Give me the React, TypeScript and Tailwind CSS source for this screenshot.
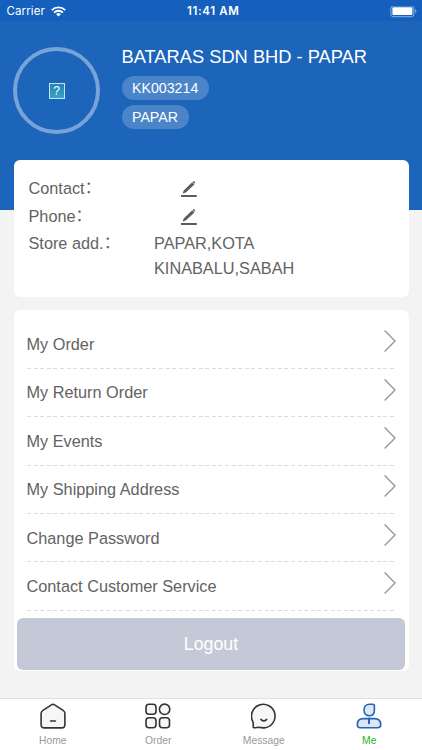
import type { ReactNode } from "react";

const menu = [
  "My Order",
  "My Return Order",
  "My Events",
  "My Shipping Address",
  "Change Password",
  "Contact Customer Service"
];

function StatusBar() {
  return (
    <div className="h-[21px] grid grid-cols-3 items-center bg-[#1560bd] pt-[2px] pl-[6.5px] pr-[5px] text-white font-['Inter',sans-serif] text-[11.5px]">
      <div className="flex items-center gap-[6px]">
        <span className="tracking-[0.1px]">Carrier</span>
        <svg width="15" height="11" viewBox="0 0 15 11" fill="none" stroke="white" strokeWidth="1.9">
          <path d="M0.8 4.1a9.6 9.6 0 0 1 13.4 0" />
          <path d="M3.1 6.6a6.3 6.3 0 0 1 8.8 0" />
          <path d="M7.5 10.6 5.1 8.2a3.4 3.4 0 0 1 4.8 0z" fill="white" stroke="none" />
        </svg>
      </div>
      <span className="text-center font-semibold whitespace-nowrap tracking-[0.65px] pl-[3px]">11:41 AM</span>
      <svg className="justify-self-end" width="27" height="12" viewBox="0 0 27 12">
        <rect x="0.9" y="-0.1" width="23" height="10.8" rx="2.4" fill="none" stroke="#8db3e2" />
        <rect x="2.4" y="1.2" width="20" height="7.8" rx="1" fill="white" />
        <path d="M25.2 3.3v3.8c1.6-.6 1.6-3.2 0-3.8z" fill="#8db3e2" />
      </svg>
    </div>
  );
}

function Avatar() {
  return (
    <div className="w-[87px] h-[87px] shrink-0 rounded-full border-4 border-[#77a3d9] flex items-center justify-center">
      <div className="w-4 h-4 border border-[#c5e4f2] bg-linear-to-b from-[#2584b8] to-[#36a5c4] text-white text-[12px] leading-none flex items-center justify-center">
        ?
      </div>
    </div>
  );
}

function EditIcon() {
  return (
    <svg className="mt-[5px] ml-[27px]" width="16" height="17" viewBox="0 0 16 17" fill="#5c5c5c">
      <path d="M2.7 9.4 11.2 1.3 13.4 3.5 4.8 11.6 1.6 12.6zM11.8 .8c.6-.6 1.3-.6 1.9 0s.6 1.2 0 1.8l-.1.1-1.9-1.8z" />
      <rect x="0" y="14" width="15.8" height="2" />
    </svg>
  );
}

function Row({ label, children }: { label: string; children: ReactNode }) {
  return (
    <div className="flex h-[27.5px]">
      <div className="w-[125.5px] shrink-0 flex leading-[27.5px]">
        <span>{label}</span>
        <span className="-mt-[2px] text-[16px] font-['Noto_Sans_CJK_SC',sans-serif]">：</span>
      </div>
      <div className="leading-[25.3px] pt-[1px]">{children}</div>
    </div>
  );
}

function MenuItem({ label }: { label: string }) {
  return (
    <div className="h-[48.4px] flex flex-col justify-end">
      <div className="flex items-center justify-between h-[47.4px]">
        <span className="text-[16.3px]">{label}</span>
        <svg className="relative -top-[3px]" width="12" height="22" viewBox="0 0 12 22" fill="none" stroke="#999" strokeWidth="1.4">
          <path d="M.6 .6 11 11 .6 21.4" />
        </svg>
      </div>
      <div className="h-px bg-[repeating-linear-gradient(90deg,#dcdcdc_0_4px,transparent_4px_6.6px)]" />
    </div>
  );
}

function Tab({ label, active, children }: { label: string; active?: boolean; children: ReactNode }) {
  return (
    <div className="flex-1 flex flex-col items-center pt-1">
      <svg width="26" height="26" viewBox="0 0 26 26" fill="none" stroke={active ? "#2464b4" : "#333"} strokeWidth="1.6" strokeLinejoin="round" strokeLinecap="round">
        {children}
      </svg>
      <span className={active ? "mt-[5px] text-[10.3px] leading-[13px] text-[#19b81b]" : "mt-[5px] text-[10.3px] leading-[13px] text-[#999]"}>
        {label}
      </span>
    </div>
  );
}

export default function App() {
  return (
    <div className="w-[422px] h-[750px] overflow-hidden flex flex-col bg-[#f3f3f3] text-[#636363] font-['Liberation_Sans','Noto_Sans_CJK_SC',sans-serif]">
      <StatusBar />
      <div className="h-[189px] shrink-0 bg-[#1d65ba] pl-[13px] pt-[26px] flex items-start gap-[21.5px]">
        <Avatar />
        <div className="text-white flex flex-col items-start">
          <h1 className="text-[18.3px] leading-5">BATARAS SDN BHD - PAPAR</h1>
          <span className="mt-[9px] h-6 rounded-full bg-[#4a84c9] px-[10.5px] text-[14.2px] leading-[24px]">KK003214</span>
          <span className="mt-[5px] h-6 rounded-full bg-[#4a84c9] px-[10.5px] text-[14.2px] leading-[24px]">PAPAR</span>
        </div>
      </div>

      <div className="relative -mt-[50px] mx-[13.5px] h-[136.5px] shrink-0 rounded-[6px] bg-white pt-[15px] pl-[15px] text-[16.3px]">
        <Row label="Contact"><EditIcon /></Row>
        <Row label="Phone"><EditIcon /></Row>
        <Row label="Store add.">PAPAR,KOTA<br />KINABALU,SABAH</Row>
      </div>

      <div className="mt-[13.5px] mx-[13.5px] h-[360.5px] shrink-0 rounded-[6px] bg-white flex flex-col pt-[10.5px]">
        <div className="px-[13px]">
          {menu.map((label) => (
            <MenuItem key={label} label={label} />
          ))}
        </div>
        <button className="mt-[7px] mx-[3.5px] h-[52.5px] shrink-0 rounded-[6px] bg-[#c5c9d7] text-white text-[17.8px] pt-[1px]">
          Logout
        </button>
      </div>

      <div className="mt-auto h-[52px] shrink-0 flex bg-white border-t border-[#dfdfdf]">
        <Tab label="Home">
          <path d="M13 1.2c.6 0 1.1.2 1.6.6l8.5 5.5c1.2.8 1.8 1.6 1.8 3v11.2c0 2.3-1.1 3.4-3.4 3.4h-17c-2.3 0-3.4-1.1-3.4-3.4V10.3c0-1.4.6-2.2 1.8-3l8.5-5.5c.5-.4 1-.6 1.6-.6z" fill="#f6f6f6" />
          <path d="M10.6 18h4.8" />
        </Tab>
        <Tab label="Order">
          <rect x="1" y="1.2" width="10" height="10" rx="3" fill="#f6f6f6" />
          <circle cx="19.6" cy="6.3" r="5.2" fill="#f6f6f6" />
          <rect x="1" y="14.7" width="10" height="10" rx="3" fill="#f6f6f6" />
          <rect x="14.5" y="14.7" width="10" height="10" rx="3" fill="#f6f6f6" />
        </Tab>
        <Tab label="Message">
          <path d="M2.2 23.8c.2-1.7.2-3.5-.4-5.2A11.8 11.8 0 1 1 13.3 24.9c-2 0-3.2-.5-4.9-.5-1.600-.1-3 .3-4.900.4-.9.1-1.400-.2-1.300-1z" fill="#f6f6f6" />
          <path d="M10 16.4c1.200 2 4.400 2 5.600 0" strokeWidth="1.8" />
        </Tab>
        <Tab label="Me" active>
          <path d="M13.500 1.200h3c1.300 0 1.900.6 1.900 1.900v4.200c0 3.300-2.100 5.500-5.200 5.500S8 10.500 8 7.100c0-3.600 2-5.900 5.500-5.900z" fill="#dce6f6" />
          <path d="M7.500 15.600h11c4 0 6.200 2.400 6.200 6.200 0 2-1 3-3 3H4.300c-2 0-3-1-3-3 0-3.800 2.200-6.200 6.200-6.200z" fill="#dce6f6" />
          <path d="M13 15.600v4.600" strokeWidth="2" />
        </Tab>
      </div>
    </div>
  );
}
